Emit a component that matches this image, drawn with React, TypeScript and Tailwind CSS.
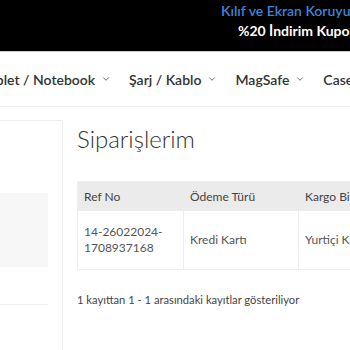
import React from "react";
import { FiChevronDown } from "react-icons/fi";

const navItems = ["Tablet / Notebook", "Şarj / Kablo", "MagSafe", "Case"];

const App: React.FC = () => {
  return (
    <div
      className="h-[350px] w-[350px] overflow-hidden bg-white text-[#333]"
      style={{ fontFamily: 'Lato, "Noto Sans", sans-serif' }}
    >
      {/* top promo bar */}
      <div className="h-[51px] overflow-hidden whitespace-nowrap bg-black">
        <div className="pl-[221px] pt-[2px] text-[14px] font-semibold leading-[18px] text-[#3f84dc]">
          Kılıf ve Ekran Koruyucu
        </div>
        <div className="pl-[238px] pt-[2px] text-[14px] font-bold leading-[18px] text-white">
          %20 İndirim Kuponu
        </div>
      </div>
      <div className="h-px bg-[#c8c8c8]" />

      {/* nav */}
      <div className="ml-[-18px] flex h-[55px] items-center gap-[18px] overflow-hidden whitespace-nowrap border-b border-[#f0f0f0]">
        {navItems.map((item) => (
          <div key={item} className="flex items-center gap-[6px] text-[14px] font-semibold text-[#333]">
            {item}
            {item !== "Case" && <FiChevronDown className="h-[10px] w-[10px] text-[#555]" />}
          </div>
        ))}
      </div>

      {/* content */}
      <div className="flex gap-[14px] pt-[13px]">
        <div className="h-[300px] w-[63px] shrink-0 border-r border-t border-[#eee] pt-[72px]">
          <div className="h-[74px] w-[48px] bg-[#f7f7f7]" />
          <div className="mt-[37px] h-px w-[48px] bg-[#eee]" />
        </div>

        <div className="min-w-0 flex-1">
          <h1 className="mt-[4px] text-[24px] font-light leading-[30px] text-[#333]">Siparişlerim</h1>

          <div className="mt-[27px] w-[300px] overflow-hidden border border-[#eee] text-[12px]">
            <div className="flex h-[29px] items-center bg-[#ebebeb] text-[#444]">
              <div className="w-[106px] pl-[6px]">Ref No</div>
              <div className="w-[115px] pl-[6px]">Ödeme Türü</div>
              <div className="flex-1 whitespace-nowrap pl-[6px]">Kargo Bilgisi</div>
            </div>
            <div className="flex h-[58px] text-[#555]">
              <div className="flex w-[106px] items-center border-r border-[#eee] pl-[6px]">
                <div className="leading-[16px]">
                  14-26022024-
                  <br />
                  1708937168
                </div>
              </div>
              <div className="flex w-[115px] items-center border-r border-[#eee] pl-[6px]">Kredi Kartı</div>
              <div className="flex flex-1 items-center whitespace-nowrap pl-[6px]">Yurtiçi Kargo</div>
            </div>
          </div>

          <p className="mt-[22px] whitespace-nowrap text-[11.2px] text-[#444]">
            1 kayıttan 1 - 1 arasındaki kayıtlar gösteriliyor
          </p>
        </div>
      </div>
    </div>
  );
};

export default App;
